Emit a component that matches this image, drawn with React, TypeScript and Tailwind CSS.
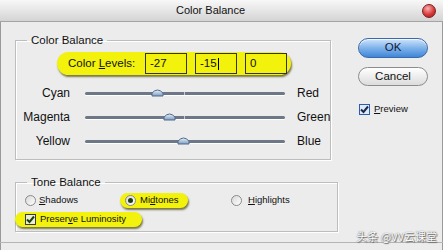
import React from "react";

const Thumb = ({ left }: { left: number }) => (
  <svg
    width="13"
    height="9"
    viewBox="0 0 13 9"
    className="absolute top-[-4px]"
    style={{ left: left - 6 }}
  >
    <defs>
      <linearGradient id="tg" x1="0" y1="0" x2="0" y2="1">
        <stop offset="0" stopColor="#e8f2fc" />
        <stop offset="1" stopColor="#7d9cc0" />
      </linearGradient>
    </defs>
    <path d="M1 8 L1 5 Q6.5 -1 12 5 L12 8 Z" fill="url(#tg)" stroke="#4f6a8c" strokeWidth="1" />
  </svg>
);

const SliderRow = ({ left, right, pos }: { left: string; right: string; pos: number }) => (
  <div className="flex items-center h-[24px] text-[12px]">
    <span className="w-[54px] text-right">{left}</span>
    <div className="relative ml-[15px] w-[200px] h-[3px] rounded-full bg-[#6c7887] shadow-[0_1px_0_#ffffff]">
      <div className="absolute left-[99px] top-0 w-[1px] h-[3px] bg-[#c8ccd2]" />
      <Thumb left={pos} />
    </div>
    <span className="ml-[12px]">{right}</span>
  </div>
);

const Radio = ({ on }: { on?: boolean }) => (
  <span className="w-[11px] h-[11px] rounded-full border border-[#8a8a8a] bg-gradient-to-br from-[#d8d8d8] to-white flex items-center justify-center shrink-0">
    {on && <span className="w-[5px] h-[5px] rounded-full bg-[#1f3d12]" />}
  </span>
);

const Check = ({ blue }: { blue?: boolean }) => (
  <span
    className={`w-[11px] h-[11px] border ${blue ? "border-[#2a5db0] bg-[#dfe9f7]" : "border-[#3a3a3a] bg-[#e8f0d0]"} flex items-center justify-center shrink-0`}
  >
    <svg width="9" height="9" viewBox="0 0 9 9">
      <path d="M1 4.5 L3.5 7 L8 1.5" fill="none" stroke={blue ? "#1a2a50" : "#1f3d12"} strokeWidth="2" />
    </svg>
  </span>
);

const Input = ({ v, caret }: { v: string; caret?: boolean }) => (
  <div className="w-[42px] h-[21px] border border-[#333] flex items-center pl-[4px] text-[11.5px]">
    {v}
    {caret && <span className="w-[1px] h-[12px] bg-black ml-[1px]" />}
  </div>
);

export default function App() {
  return (
    <div className="relative w-[443px] h-[250px] bg-[#ececec] overflow-hidden font-['Liberation_Sans',Arial,sans-serif] text-[#111] shadow-[inset_1px_0_0_#9a9a9a,inset_-1px_0_0_#9a9a9a]">
      {/* title bar */}
      <div className="flex items-center h-[22px] bg-gradient-to-b from-[#f8f8f8] to-[#d4d4d4] border-b border-[#a4a4a4]">
        <div className="flex-1 text-center text-[11px]">Color Balance</div>
        <div className="w-[22px] flex items-center">
          <span className="ml-[1px] w-[14px] h-[14px] rounded-full border border-[#7a2020] bg-[radial-gradient(circle_at_40%_30%,#f8b0b0,#d83a3a_55%,#a01818)]" />
        </div>
      </div>

      <div className="flex h-[221px] border-b border-[#b4b4b4]">
        {/* left column */}
        <div className="pl-[15px]">
          <fieldset className="mt-[11px] w-[314px] h-[127px] border border-[#bdbdbd] shadow-[1px_1px_0_#fff,inset_1px_1px_0_#fff]">
            <legend className="ml-[11px] px-[4px] text-[11.5px] leading-[14px]">Color Balance</legend>
            <div className="mt-[5px] ml-[41px] w-[234px] h-[23px] rounded-full bg-[#f2f20c] shadow-[1px_2px_2px_rgba(70,70,0,0.7)] flex items-center">
              <span className="pl-[11px] w-[88px] text-[11.5px]">
                Color <span className="underline">L</span>evels:
              </span>
              <div className="flex gap-[8px]">
                <Input v="-27" />
                <Input v="-15" caret />
                <Input v="0" />
              </div>
            </div>
            <div className="mt-[6px]">
              <SliderRow left="Cyan" right="Red" pos={72} />
              <SliderRow left="Magenta" right="Green" pos={84} />
              <SliderRow left="Yellow" right="Blue" pos={98} />
            </div>
          </fieldset>

          <fieldset className="mt-[15px] w-[323px] h-[57px] border border-[#bdbdbd] shadow-[1px_1px_0_#fff,inset_1px_1px_0_#fff]">
            <legend className="ml-[11px] px-[4px] text-[11.5px] leading-[14px]">Tone Balance</legend>
            <div className="mt-[3px] h-[16px] flex items-center text-[9.5px]">
              <div className="ml-[9px] w-[95px] flex items-center gap-[3px]">
                <Radio />
                <span>
                  <span className="underline">S</span>hadows
                </span>
              </div>
              <div className="w-[68px] h-[15px] pl-[5px] rounded-full bg-[#f2f20c] shadow-[1px_2px_2px_rgba(70,70,0,0.7)] flex items-center gap-[4px]">
                <Radio on />
                <span>
                  Mi<span className="underline">d</span>tones
                </span>
              </div>
              <div className="ml-[43px] flex items-center gap-[6px]">
                <Radio />
                <span>
                  <span className="underline">H</span>ighlights
                </span>
              </div>
            </div>
            <div className="mt-[4px] ml-[-1px] w-[127px] h-[15px] pl-[10px] rounded-full bg-[#f2f20c] shadow-[1px_2px_2px_rgba(70,70,0,0.7)] flex items-center gap-[4px] text-[9.5px]">
              <Check />
              <span>
                Preser<span className="underline">v</span>e Luminosity
              </span>
            </div>
          </fieldset>
        </div>

        {/* right column */}
        <div className="ml-[20px] flex flex-col">
          <button className="mt-[16px] w-[70px] h-[20px] rounded-full border border-[#3b6aa6] bg-gradient-to-b from-[#cfe4fb] via-[#7fb2ea] to-[#3f86d8] text-[11.5px] text-[#10203a] shadow-[inset_0_1px_0_#eef6ff]">
            OK
          </button>
          <button className="mt-[9px] w-[70px] h-[19px] rounded-full border border-[#8c8c8c] bg-gradient-to-b from-white to-[#dcdcdc] text-[11.5px]">
            Cancel
          </button>
          <div className="mt-[16px] ml-[1px] flex items-center gap-[4px] text-[9.5px]">
            <Check blue />
            <span>
              <span className="underline">P</span>review
            </span>
          </div>
        </div>
      </div>

      {/* watermark */}
      <div className="absolute right-[6px] bottom-[6px] text-[11px] text-white font-['Noto_Sans_CJK_SC',sans-serif] [text-shadow:0_0_1px_#555,1px_1px_1px_#666]">
        头条 @VV云课堂
      </div>
    </div>
  );
}
